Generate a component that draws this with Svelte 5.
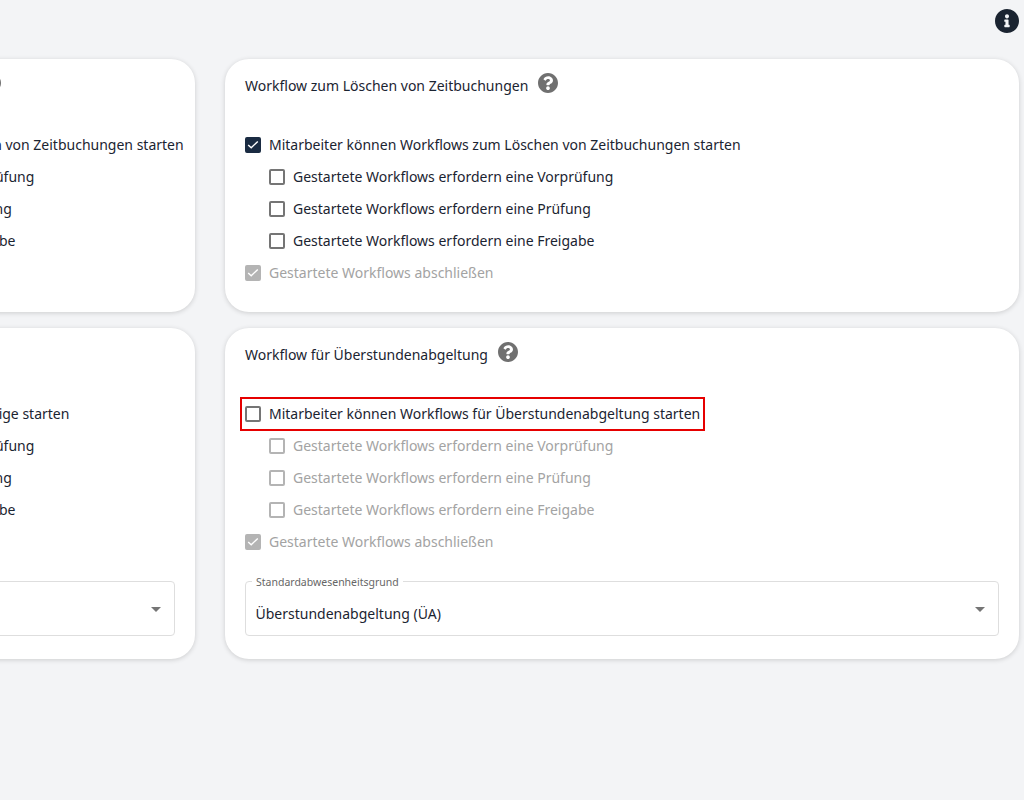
<script>
  const helpIcon =
    "M504 256c0 136.997-111.043 248-248 248S8 392.997 8 256C8 119.083 119.043 8 256 8s248 111.083 248 248zM262.655 90c-54.497 0-89.255 22.957-116.549 63.758-3.536 5.286-2.353 12.415 2.715 16.258l34.699 26.31c5.205 3.947 12.621 3.008 16.665-2.122 17.864-22.658 30.113-35.797 57.303-35.797 20.429 0 45.698 13.148 45.698 32.958 0 14.976-12.363 22.667-32.534 33.976C247.128 238.528 216 254.941 216 296v4c0 6.627 5.373 12 12 12h56c6.627 0 12-5.373 12-12v-1.333c0-28.462 83.186-29.647 83.186-106.667 0-58.002-60.165-102-116.531-102zM256 338c-25.365 0-46 20.635-46 46 0 25.364 20.635 46 46 46s46-20.636 46-46c0-25.365-20.635-46-46-46z";
  const infoIcon =
    "M256 8C119.043 8 8 119.083 8 256c0 136.997 111.043 248 248 248s248-111.003 248-248C504 119.083 392.957 8 256 8zm0 110c23.196 0 42 18.804 42 42s-18.804 42-42 42-42-18.804-42-42 18.804-42 42-42zm56 254c0 6.627-5.373 12-12 12h-88c-6.627 0-12-5.373-12-12v-24c0-6.627 5.373-12 12-12h12v-64h-12c-6.627 0-12-5.373-12-12v-24c0-6.627 5.373-12 12-12h64c6.627 0 12 5.373 12 12v100h12c6.627 0 12 5.373 12 12v24z";

  const cards = [
    {
      title: "Workflow zum Hinzufügen von Zeitbuchungen",
      start: "Mitarbeiter können Workflows zum Hinzufügen von Zeitbuchungen starten",
      checked: true,
      locked: false
    },
    {
      title: "Workflow zum Löschen von Zeitbuchungen",
      start: "Mitarbeiter können Workflows zum Löschen von Zeitbuchungen starten",
      checked: true,
      locked: false
    },
    {
      title: "Workflow für Abwesenheiten",
      start: "Mitarbeiter können Workflows für übrige sonstige starten",
      checked: true,
      locked: false,
      select: "Urlaub (U)"
    },
    {
      title: "Workflow für Überstundenabgeltung",
      start: "Mitarbeiter können Workflows für Überstundenabgeltung starten",
      checked: false,
      locked: true,
      marked: true,
      select: "Überstundenabgeltung (ÜA)"
    }
  ];

  const steps = [
    "Gestartete Workflows erfordern eine Vorprüfung",
    "Gestartete Workflows erfordern eine Prüfung",
    "Gestartete Workflows erfordern eine Freigabe"
  ];
</script>

{#snippet box(checked, disabled)}
  <span class="box" class:checked class:disabled>
    {#if checked}
      <svg viewBox="0 0 16 16" width="16" height="16">
        <path d="M3.2 8l3 2.8 6.6-6.4" fill="none" stroke="#fff" stroke-width="1.4" />
      </svg>
    {/if}
  </span>
{/snippet}

<div class="page">
  <header class="top">
    <svg class="info" viewBox="8 8 496 496" width="24" height="24"><path d={infoIcon} /></svg>
  </header>

  <div class="grid">
    {#each cards as card}
      <section class="card">
        <div class="head">
          <h2>{card.title}</h2>
          <svg class="help" viewBox="8 8 496 496" width="20" height="20"><path d={helpIcon} /></svg>
        </div>

        <div class="rows">
          <label class="row" class:marked={card.marked}>
            {@render box(card.checked, false)}
            <span>{card.start}</span>
          </label>
          {#each steps as step}
            <label class="row sub" class:off={card.locked}>
              {@render box(false, card.locked)}
              <span>{step}</span>
            </label>
          {/each}
          <label class="row off">
            {@render box(true, true)}
            <span>Gestartete Workflows abschließen</span>
          </label>
        </div>

        {#if card.select}
          <div class="select">
            <span class="legend">Standardabwesenheitsgrund</span>
            <span class="value">{card.select}</span>
            <span class="arrow"></span>
          </div>
        {/if}
      </section>
    {/each}
  </div>
</div>

<style>
  :global(body) {
    background: #f3f4f6;
    overflow: hidden;
  }

  .page {
    height: 800px;
    overflow: hidden;
    font-family: "Noto Sans", sans-serif;
    font-size: 14px;
    color: #1b2431;
  }

  .top {
    display: flex;
    justify-content: flex-end;
    height: 59px;
    padding: 9px 5px 0 0;
    box-sizing: border-box;
  }

  .info path {
    fill: #1b2431;
  }

  .grid {
    display: grid;
    grid-template-columns: 549px 794px;
    gap: 16px 30px;
    margin-left: -354px;
    width: 1373px;
    align-items: stretch;
  }

  .card {
    background: #fff;
    border-radius: 24px;
    padding: 14px 20px 23px;
    box-shadow: 0 1px 5px rgba(0, 0, 0, 0.16);
  }

  .head {
    display: flex;
    align-items: center;
    gap: 10px;
    height: 20px;
  }

  h2 {
    margin: 6px 0 0;
    font-size: 14px;
    font-weight: 400;
    line-height: 20px;
    white-space: nowrap;
  }

  .help path {
    fill: #707070;
  }

  .rows {
    display: flex;
    flex-direction: column;
    margin-top: 36px;
  }

  .row {
    display: flex;
    align-items: center;
    gap: 8px;
    height: 32px;
    line-height: 20px;
    white-space: nowrap;
  }

  .row.sub {
    padding-left: 24px;
  }

  .row.off {
    color: #a3a3a3;
  }

  .row.marked {
    outline: 2px solid #e60000;
    outline-offset: -1px;
    width: max-content;
    padding: 0 4px;
    margin-left: -4px;
    box-sizing: border-box;
  }

  .box {
    flex: none;
    width: 16px;
    height: 16px;
    box-sizing: border-box;
    border: 2px solid #757575;
    border-radius: 2px;
    position: relative;
  }

  .box.disabled {
    border-color: #b4b4b4;
  }

  .box.checked {
    background: #1a2b42;
    border-color: #1a2b42;
  }

  .box.checked.disabled {
    background: #b4b4b4;
    border-color: #b4b4b4;
  }

  .box svg {
    position: absolute;
    left: -2px;
    top: -2px;
  }

  .select {
    position: relative;
    display: flex;
    align-items: center;
    justify-content: space-between;
    height: 55px;
    box-sizing: border-box;
    margin-top: 23px;
    padding: 10px 11px 0 9.5px;
    border: 1px solid #dedede;
    border-radius: 4px;
  }

  .legend {
    position: absolute;
    left: 6px;
    top: -7px;
    padding: 0 4px;
    background: #fff;
    font-size: 10.5px;
    line-height: 14px;
    color: #666;
  }

  .arrow {
    width: 0;
    height: 0;
    margin: -8px 2px 0 0;
    border-left: 5px solid transparent;
    border-right: 5px solid transparent;
    border-top: 5px solid #757575;
  }
</style>
